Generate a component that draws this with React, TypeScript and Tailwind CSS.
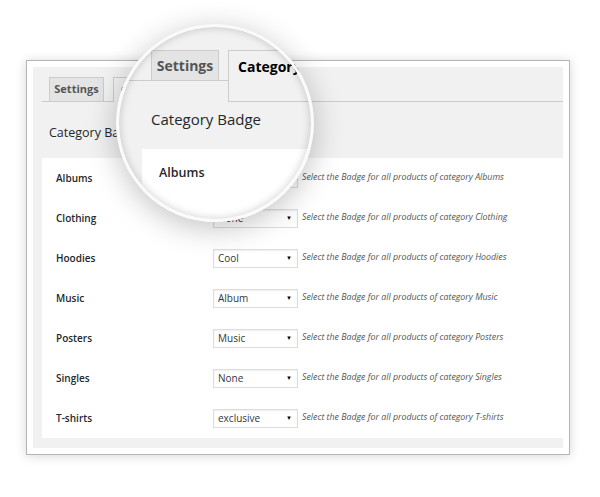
const rows = [
  { name: "Albums", value: "None" },
  { name: "Clothing", value: "None" },
  { name: "Hoodies", value: "Cool" },
  { name: "Music", value: "Album" },
  { name: "Posters", value: "Music" },
  { name: "Singles", value: "None" },
  { name: "T-shirts", value: "exclusive" },
];

function FakeSelect({ value }: { value: string }) {
  return (
    <div className="flex h-[19px] w-[85px] items-center justify-between border border-[#dddddd] bg-white pl-[4px] pr-[5px] text-[10px] text-[#32373c] shadow-[inset_0_1px_2px_rgba(0,0,0,0.07)]">
      <span>{value}</span>
      <span className="text-[6px] text-black">▼</span>
    </div>
  );
}

function Lens() {
  return (
    <div className="absolute left-[116px] top-[24px] h-[198px] w-[198px] overflow-hidden rounded-full bg-[#f1f1f1] shadow-[0_6px_30px_rgba(0,0,0,0.24)]">
      <div className="pt-[26px]">
        <div className="flex h-[52px] items-start">
          <div className="flex h-[31px] w-[112px] shrink-0 items-end border-b border-[#cccccc] pl-[35px]">
            <div className="flex h-[30px] w-[68px] items-center justify-center border border-b-0 border-[#cccccc] bg-[#e4e4e4] text-[14px] font-bold text-[#555555]">
              Settings
            </div>
          </div>
          <div className="h-[52px] flex-1 border-l border-t border-b border-[#cccccc] pl-[9px] pt-[5px] text-[14px] font-bold leading-[22px] whitespace-nowrap text-black">
            Category Badge
          </div>
        </div>
        <div className="mt-[6px] pl-[35px] text-[15px] leading-[22px] text-[#23282d]">
          Category Badge
        </div>
        <div className="ml-[26px] mt-[19px] h-[80px] bg-white pl-[17px] pt-[14px] text-[12.5px] font-semibold leading-[20px] text-[#23282d]">
          Albums
        </div>
      </div>
      <div className="pointer-events-none absolute inset-0 rounded-full border-[3px] border-[#fafafa] shadow-[inset_0_0_9px_rgba(0,0,0,0.2)]" />
    </div>
  );
}

export default function App() {
  return (
    <div className="relative h-[497px] w-[600px] overflow-hidden bg-white pl-[26px] pt-[60px] font-['Open_Sans',sans-serif]">
      <div className="h-[395px] w-[544px] border border-[#b5b5b5] bg-white p-[6px] shadow-[0_1px_10px_rgba(0,0,0,0.16)]">
        <div className="h-[381px] bg-[#f1f1f1] pl-[9px] pt-[10px]">
          <div className="flex h-[25px] items-end border-b border-[#cccccc] pl-[7px]">
            <div className="flex h-[24px] w-[55px] items-center justify-center border border-b-0 border-[#cccccc] bg-[#e4e4e4] text-[11px] font-bold text-[#555555]">
              Settings
            </div>
            <div className="ml-[9px] -mb-px flex h-[25px] items-center border border-b-0 border-[#cccccc] bg-[#f1f1f1] px-[7px] text-[11px] font-bold text-black">
              Category Badge
            </div>
          </div>
          <div className="h-[56px] pl-[7px] pt-[19px] text-[12.5px] leading-[24px] text-[#23282d]">
            Category Badge
          </div>
          <div className="bg-white">
            {rows.map((r) => (
              <div key={r.name} className="flex h-[40px] items-center">
                <div className="w-[171px] shrink-0 pl-[14px] text-[10px] font-semibold text-[#23282d]">
                  {r.name}
                </div>
                <FakeSelect value={r.value} />
                <div className="ml-[4px] text-[8.8px] italic text-[#555555]">
                  Select the Badge for all products of category {r.name}
                </div>
              </div>
            ))}
          </div>
        </div>
      </div>
      <Lens />
    </div>
  );
}
